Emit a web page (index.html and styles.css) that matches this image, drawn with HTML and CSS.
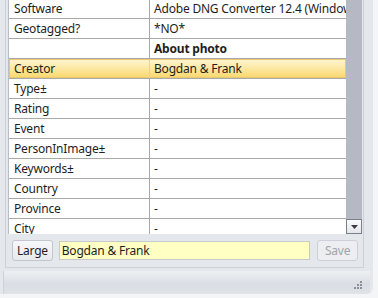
FILE: index.html
```html
<html>
    <head>
        <title>Metadata</title>
        <meta name="viewport" content="width=device-width, initial-scale=1">
        <link rel="stylesheet" href="styles.css">
    </head>
    <body>
        <div class="window">
            <div class="panel">
                <div class="grid">
                    <div class="list">
                        <div class="row"><div class="key">Software</div><div class="val">Adobe DNG Converter 12.4 (Windows)</div></div>
                        <div class="row"><div class="key">Geotagged?</div><div class="val">*NO*</div></div>
                        <div class="row"><div class="key"></div><div class="val bold">About photo</div></div>
                        <div class="row selected"><div class="key">Creator</div><div class="val">Bogdan &amp; Frank</div></div>
                        <div class="row"><div class="key">Type±</div><div class="val">-</div></div>
                        <div class="row"><div class="key">Rating</div><div class="val">-</div></div>
                        <div class="row"><div class="key">Event</div><div class="val">-</div></div>
                        <div class="row"><div class="key">PersonInImage±</div><div class="val">-</div></div>
                        <div class="row"><div class="key">Keywords±</div><div class="val">-</div></div>
                        <div class="row"><div class="key">Country</div><div class="val">-</div></div>
                        <div class="row"><div class="key">Province</div><div class="val">-</div></div>
                        <div class="row"><div class="key">City</div><div class="val">-</div></div>
                    </div>
                    <div class="scrollbar">
                        <div class="arrow-down">
                            <svg width="7" height="4" viewBox="0 0 7 4"><path d="M0 0h7L3.5 4z" fill="#3a3d44"/></svg>
                        </div>
                    </div>
                </div>
                <div class="editbar">
                    <button class="btn">Large</button>
                    <div class="edit">Bogdan &amp; Frank</div>
                    <button class="btn disabled">Save</button>
                </div>
            </div>
            <div class="statusbar">
                <svg class="grip" width="8" height="8" viewBox="0 0 8 8">
                    <rect x="6" y="0" width="2" height="2" fill="#8a9099"/>
                    <rect x="3" y="3" width="2" height="2" fill="#8a9099"/>
                    <rect x="6" y="3" width="2" height="2" fill="#8a9099"/>
                    <rect x="0" y="6" width="2" height="2" fill="#8a9099"/>
                    <rect x="3" y="6" width="2" height="2" fill="#8a9099"/>
                    <rect x="6" y="6" width="2" height="2" fill="#8a9099"/>
                </svg>
            </div>
        </div>
    </body>
</html>
```
FILE: styles.css
```css
body {
    margin: 0;
    padding: 0;
    background: #f4f5f7;
    font-family: "Noto Sans", "Open Sans", sans-serif;
    font-size: 12px;
    letter-spacing: -0.2px;
    color: #1e1e1e;
}

.window {
    width: 373px;
    height: 294px;
    background: #e4e8ed;
    border-bottom-right-radius: 6px;
    display: flex;
    flex-direction: column;
}

.panel {
    margin: 0 9px 0 5px;
    padding: 0 1px 0 2px;
    border-left: 1px solid #ccd1d8;
    border-right: 1px solid #ccd1d8;
    border-bottom: 1px solid #ccd1d8;
}

.grid {
    display: flex;
    height: 234px;
    border-left: 1px solid #b9bec5;
}

.list {
    width: 337px;
    overflow: hidden;
    background: #fff;
}

.row {
    display: flex;
    height: 19px;
    line-height: 19px;
    border-bottom: 1px solid #a9a9a9;
    white-space: nowrap;
}

.row:first-child {
    margin-top: -1px;
}

.key {
    width: 135px;
    padding-left: 5px;
    border-right: 1px solid #a9a9a9;
    flex-shrink: 0;
}

.val {
    padding-left: 4px;
}

.bold {
    font-weight: bold;
}

.row.selected {
    background: linear-gradient(#fef5d3, #fde8a2 50%, #fbd66a);
    box-shadow: inset 0 0 0 1px #e9c870;
}

.row.selected .key {
    border-right-color: #ecd08a;
}

.scrollbar {
    width: 16px;
    background: #b5b9c3;
    display: flex;
    flex-direction: column;
    justify-content: flex-end;
}

.arrow-down {
    height: 13px;
    border: 1px solid #7a7f89;
    background: linear-gradient(#fafbfc, #e3e6ea);
    display: flex;
    align-items: center;
    justify-content: center;
}

.editbar {
    display: flex;
    align-items: center;
    padding: 6px 4px 6px 4px;
}

.btn {
    width: 41px;
    height: 21px;
    padding: 0;
    font-family: inherit;
    font-size: 12px;
    letter-spacing: -0.2px;
    color: #1e1e1e;
    background: linear-gradient(#f7f8fa, #e7e9ed);
    border: 1px solid #c2c7ce;
    border-radius: 3px;
}

.btn.disabled {
    color: #a3a5a8;
    background: #eceef1;
    border-color: #cdd1d7;
}

.edit {
    width: 249px;
    height: 17px;
    line-height: 17px;
    margin: 0 7px 0 6px;
    padding-left: 2px;
    background: #ffffc4;
    border: 1px solid #c6cacd;
}

.statusbar {
    height: 22px;
    margin: 3px 3px 0 3px;
    border-left: 1px solid #cdd2d8;
    border-bottom-right-radius: 4px;
    background: linear-gradient(#eef0f3, #dadee4 55%, #dfe3e8);
    display: flex;
    justify-content: flex-end;
    align-items: flex-end;
    padding: 0 8px 5px 0;
}
```
